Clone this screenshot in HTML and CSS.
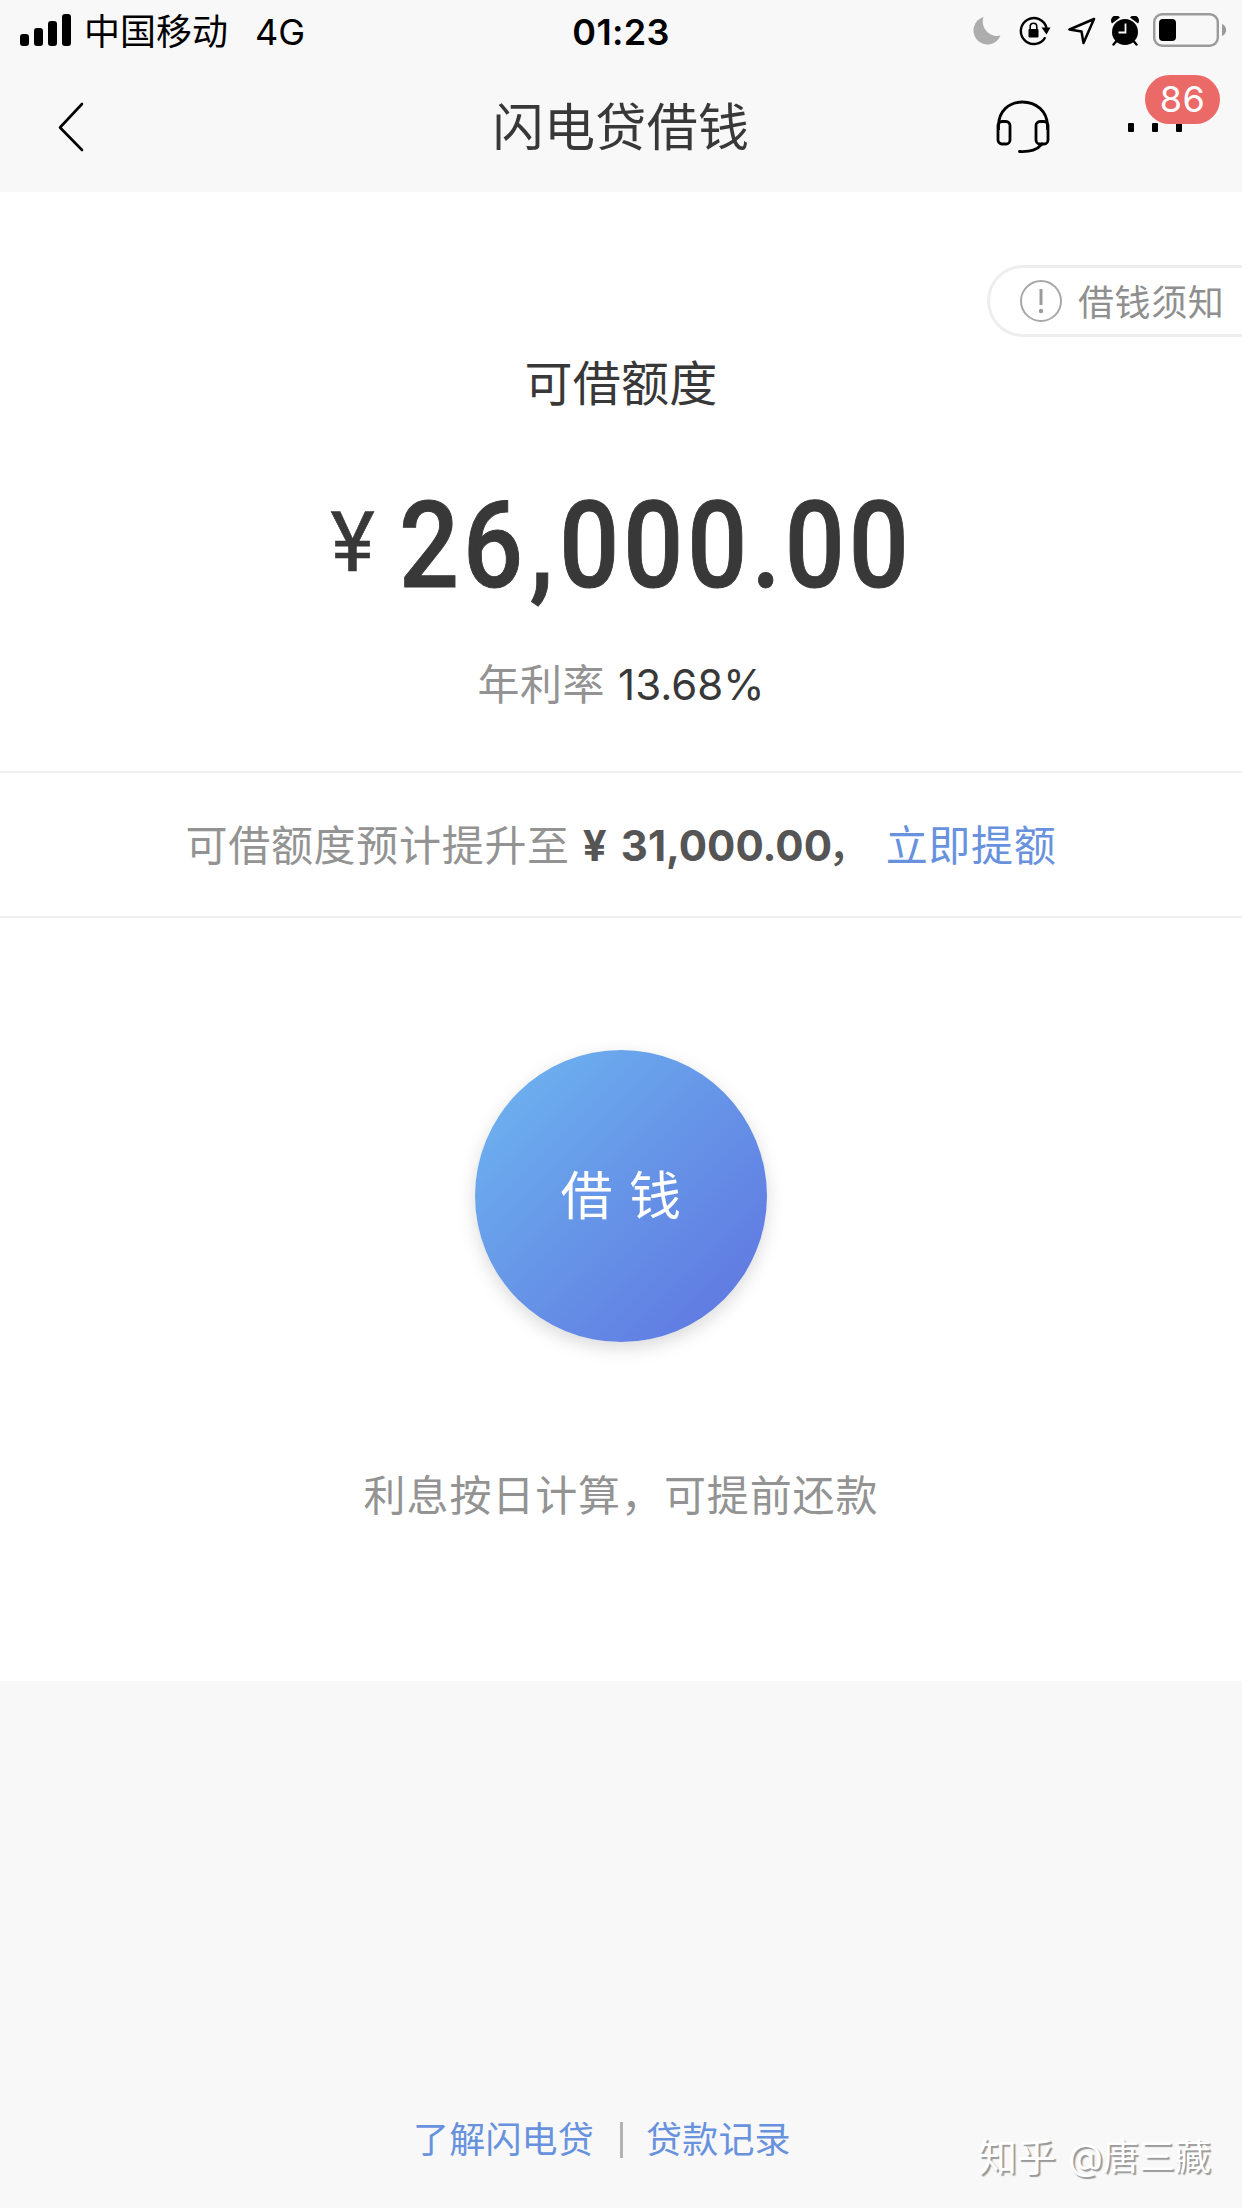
FILE: index.html
```html
<!DOCTYPE html>
<html lang="zh-CN">
<head>
    <meta charset="UTF-8">
    <meta name="viewport" content="width=device-width, initial-scale=1.0">
    <title>闪电贷借钱</title>
    <link rel="stylesheet" href="styles.css">
</head>
<body>
    <header class="header">
        <div class="status-bar">
            <div class="status-left">
                <svg class="signal" width="51" height="32" viewBox="0 0 51 32">
                    <rect x="0" y="20" width="9" height="12" rx="3"/>
                    <rect x="14" y="14" width="9" height="18" rx="3"/>
                    <rect x="28" y="7" width="9" height="25" rx="3"/>
                    <rect x="42" y="0" width="9" height="32" rx="3"/>
                </svg>
                <span class="carrier">中国移动</span>
                <span class="network">4G</span>
            </div>
            <div class="time">01:23</div>
            <div class="status-right">
                <svg class="moon" width="28" height="28" viewBox="0 0 28 28">
                    <path d="M10.500 0A14 14 0 1 0 27.500 18.500A14.500 14.500 0 0 1 10.500 0Z" fill="#adadad"/>
                </svg>
                <svg class="lock" width="32" height="30" viewBox="0 0 32 30">
                    <path d="M26.300 21.200A13 13 0 1 1 27.500 12" fill="none" stroke="#000" stroke-width="2.400"/>
                    <path d="M22.500 11.500H31.500L27.500 18.500Z"/>
                    <rect x="9.500" y="13" width="10" height="8.500" rx="1"/>
                    <path d="M11.200 13V10.500a3.300 3.300 0 0 1 6.600 0V13" fill="none" stroke="#000" stroke-width="1.600"/>
                </svg>
                <svg class="location" width="28" height="28" viewBox="0 0 28 28">
                    <path d="M26 2L1.500 12.500L13.500 14.500L15.500 26Z" fill="none" stroke="#000" stroke-width="2.500" stroke-linejoin="round"/>
                </svg>
                <svg class="alarm" width="28" height="30" viewBox="0 0 28 30">
                    <circle cx="14" cy="16" r="13"/>
                    <path d="M1 7.500A5 5 0 0 1 9 1.500Z"/>
                    <path d="M27 7.500A5 5 0 0 0 19 1.500Z"/>
                    <path d="M5.500 25L2.500 28.500M22.500 25L25.500 28.500" stroke="#000" stroke-width="2.400" stroke-linecap="round"/>
                    <path d="M14.500 7.500V16.500H7.500" fill="none" stroke="#f8f8f8" stroke-width="1.800"/>
                </svg>
                <svg class="battery" width="74" height="34" viewBox="0 0 74 34">
                    <rect x="1.200" y="1.200" width="63.600" height="31.600" rx="8" fill="none" stroke="#9a9a9a" stroke-width="2.400"/>
                    <rect x="6" y="6" width="17" height="22" rx="4"/>
                    <path d="M69 11C74.500 13 74.500 21 69 23Z" fill="#9a9a9a"/>
                </svg>
            </div>
        </div>
        <div class="nav">
            <svg class="back" width="28" height="52" viewBox="0 0 28 52">
                <path d="M25 3L3 26.500L25 49" fill="none" stroke="#000" stroke-width="2.600" stroke-linecap="round" stroke-linejoin="round"/>
            </svg>
            <h1 class="title">闪电贷借钱</h1>
            <div class="nav-right">
                <svg class="headset" width="54" height="54" viewBox="0 0 54 54" fill="none" stroke="#000" stroke-width="2.800">
                    <path d="M2.500 30V26C2.500 11 13 2 26.500 2S51.500 11 51.500 26V30"/>
                    <rect x="2" y="21.500" width="12" height="22.500" rx="4"/>
                    <rect x="40" y="21.500" width="12" height="22.500" rx="4"/>
                    <path d="M46 44C41 50 35 52 23.500 51.500" stroke-linecap="round"/>
                </svg>
                <div class="more">
                    <i class="dot"></i><i class="dot"></i><i class="dot"></i>
                    <span class="badge">86</span>
                </div>
            </div>
        </div>
    </header>

    <main class="panel">
        <section class="quota">
            <a class="notice">
                <svg width="42" height="42" viewBox="0 0 42 42">
                    <circle cx="21" cy="21" r="20" fill="none" stroke="#a8a8a8" stroke-width="2"/>
                    <path d="M21 9V25" stroke="#9b9b9b" stroke-width="3"/>
                    <circle cx="21" cy="31" r="2.200" fill="#9b9b9b"/>
                </svg>
                <span>借钱须知</span>
            </a>
            <div class="quota-label">可借额度</div>
            <div class="amount"><span class="yen">¥</span><span class="digits">26<span class="comma">,</span>000.00</span></div>
            <div class="rate">年利率<b>13.68%</b></div>
        </section>

        <section class="raise">
            <span class="raise-text">可借额度预计提升至</span>
            <span class="raise-amount"><span class="raise-yen">¥</span>31,000.00</span>
            <span class="raise-comma">，</span>
            <a class="raise-link">立即提额</a>
        </section>

        <section class="borrow">
            <button class="borrow-btn">借钱</button>
            <p class="tip">利息按日计算，可提前还款</p>
        </section>
    </main>

    <footer class="footer">
        <a>了解闪电贷</a>
        <span class="divider"></span>
        <a>贷款记录</a>
    </footer>

    <div class="watermark"><span class="site">知乎</span><span>@唐三藏</span></div>
</body>
</html>
```

FILE: styles.css
```css
* { box-sizing: border-box; }
body {
    margin: 0;
    width: 1242px;
    height: 2208px;
    position: relative;
    display: flex;
    flex-direction: column;
    overflow: hidden;
    background: #f8f8f8;
    color: #383838;
    font-family: Inter, "Noto Sans CJK SC", sans-serif;
}
svg { display: block; flex: none; }

/* status bar */
.header { height: 192px; background: #f8f8f8; }
.status-bar { display: grid; grid-template-columns: 1fr 100px 1fr; height: 62px; align-items: center; color: #000; font-size: 36px; line-height: 40px; }
.status-left { display: flex; align-items: center; padding-left: 20px; }
.signal { margin-top: -2px; }
.carrier { margin-left: 13px; padding-top: 1px; }
.network { margin-left: 27px; padding-top: 1px; }
.time { text-align: center; font-weight: 600; white-space: nowrap; letter-spacing: 0.3px; padding-top: 1px; }
.status-right { display: flex; align-items: center; justify-content: flex-end; padding-right: 15px; }
.lock { margin-left: 18px; }
.location { margin-left: 17px; }
.alarm { margin-left: 15px; }
.battery { margin-left: 14px; margin-top: -2px; }

/* nav */
.nav { display: grid; grid-template-columns: 1fr auto 1fr; align-items: center; height: 130px; }
.back { margin-left: 57px; }
.title { margin: 0; padding-top: 2px; font-size: 51px; font-weight: 400; letter-spacing: 0.4px; line-height: 60px; }
.nav-right { display: flex; align-items: center; justify-content: flex-end; padding-right: 60px; }
.more { position: relative; display: flex; gap: 18px; margin-left: 78px; }
.dot { width: 6px; height: 9px; border-radius: 1px; background: #000; }
.badge { position: absolute; left: 17px; top: -48px; width: 75px; height: 49px; border-radius: 25px; background: #eb6966; color: #fff; font-size: 36px; line-height: 49px; text-align: center; letter-spacing: 0.5px; }

/* quota */
.panel { height: 1489px; background: #fff; }
.quota { display: flex; flex-direction: column; align-items: center; height: 581px; padding-top: 73px; border-bottom: 2px solid #f0f0f0; }
.notice { align-self: flex-end; display: flex; align-items: center; width: 255px; height: 72px; padding-left: 30px; border: 3px solid #eee; border-right: none; border-radius: 36px 0 0 36px; color: #8f8f8f; font-size: 36px; letter-spacing: 0.6px; line-height: 40px; white-space: nowrap; }
.notice span { margin-left: 16px; padding-top: 3px; }
.quota-label { margin-top: 17px; font-size: 48px; letter-spacing: 0.3px; line-height: 60px; }
.amount { display: flex; align-items: center; height: 120px; margin-top: 72px; font-family: Roboto, sans-serif; font-weight: 500; line-height: 120px; }
.yen { margin-top: -6px; font-size: 84px; font-weight: 400; -webkit-text-stroke: 0.6px #383838; }
/* condensed figures, the negative margin takes up the width lost by scaling */
.digits { margin-left: 24px; margin-right: -71px; font-size: 120px; letter-spacing: 4.600px; transform: scaleX(0.88); transform-origin: left center; -webkit-text-stroke: 1px #383838; }
.comma { margin-left: 3px; margin-right: 2px; }
.rate { margin-top: 49px; color: #939393; font-size: 42px; line-height: 60px; letter-spacing: 0.5px; }
.rate b { margin-left: 13px; color: #383838; font-weight: 400; letter-spacing: 0; }

/* raise */
.raise { display: flex; align-items: center; justify-content: center; height: 145px; padding-top: 2px; border-bottom: 2px solid #f0f0f0; color: #939393; font-size: 42px; letter-spacing: 0.7px; line-height: 60px; }
.raise-amount { margin-left: 13px; color: #555; font-weight: 700; letter-spacing: 0; }
.raise-yen { margin-right: 14px; }
.raise-comma { margin-left: -4px; color: #555; font-weight: 500; }
.raise-link { margin-left: 15px; color: #6892de; }

/* borrow */
.borrow { display: flex; flex-direction: column; align-items: center; padding-top: 132px; }
.borrow-btn { width: 292px; height: 292px; padding: 2px 0 0 16px; border: none; border-radius: 50%; background: linear-gradient(135deg, #6db2f0 8%, #6694e7 50%, #6078e1 92%); box-shadow: 0 6px 18px rgba(0, 0, 0, 0.15); color: #fff; font-family: inherit; font-size: 52px; letter-spacing: 16.500px; line-height: 60px; }
.tip { margin: 124px 0 0; color: #939393; font-size: 42px; letter-spacing: 0.9px; line-height: 60px; }

/* footer */
.footer { display: flex; align-items: center; padding-left: 413px; height: 40px; margin-top: 439px; color: #6892de; font-size: 36px; letter-spacing: 0.2px; line-height: 40px; }
.divider { width: 3px; height: 36px; margin: 0 23px 0 26px; background: #b3b3b3; }

.watermark { position: absolute; left: 978px; top: 2134px; display: flex; align-items: center; gap: 12px; color: #fff; font-size: 36px; line-height: 46px; text-shadow: 2px 2px 1px #999; }
.watermark .site { font-size: 39px; }
```
